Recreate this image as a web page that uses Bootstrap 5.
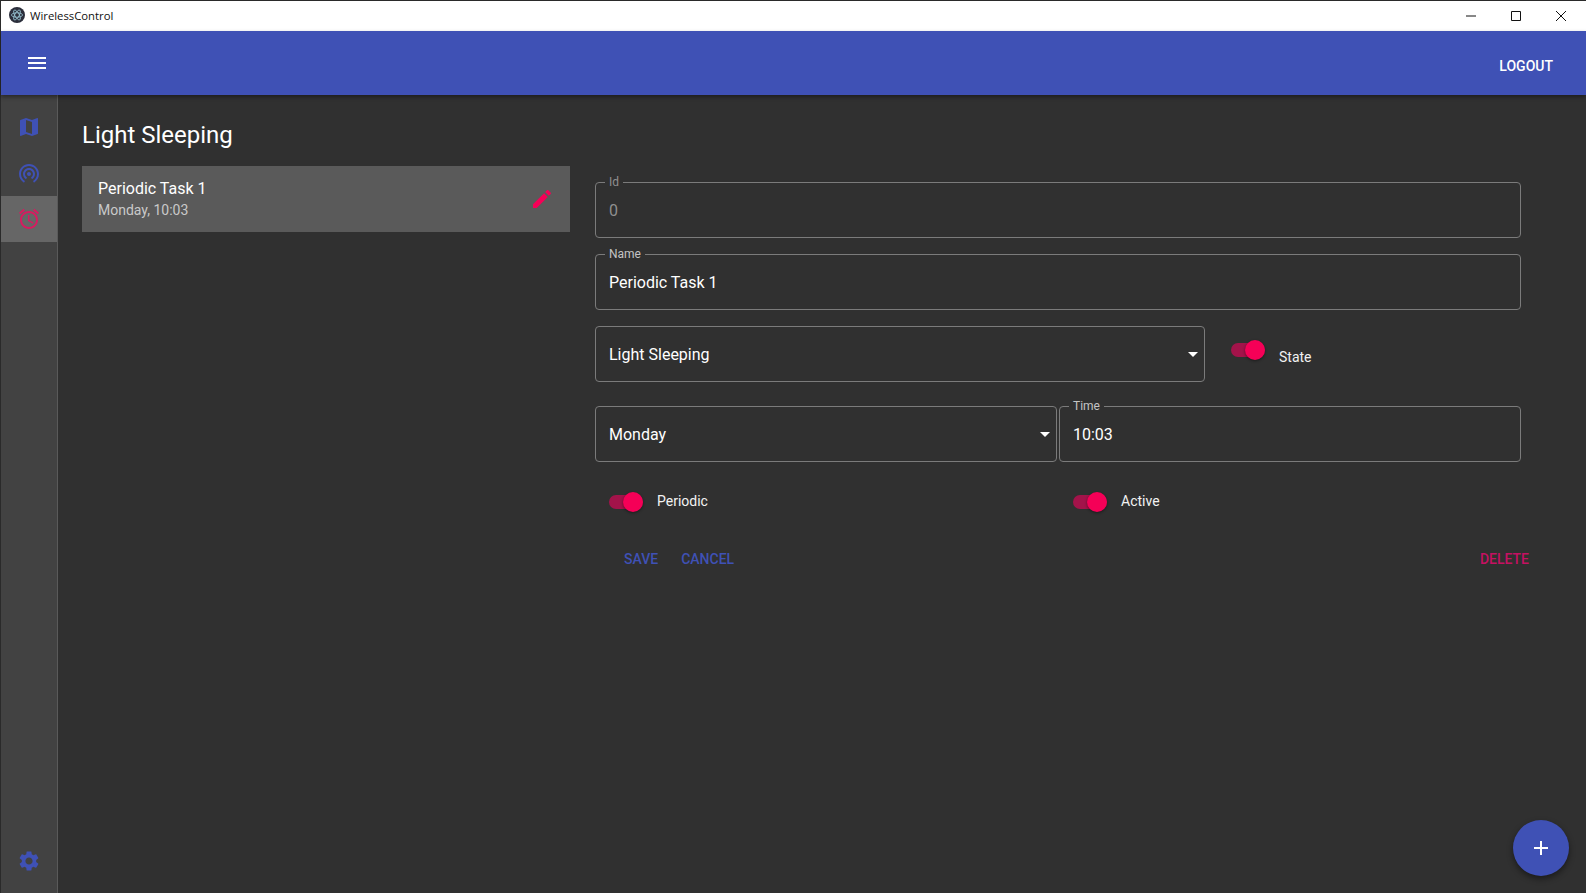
<!DOCTYPE html>
<html lang="en">
<head>
  <meta charset="UTF-8">
  <title>WirelessControl</title>
  <meta name="viewport" content="width=device-width, initial-scale=1">
  <link href="https://cdn.jsdelivr.net/npm/bootstrap@5.3.0/dist/css/bootstrap.min.css" rel="stylesheet">
  <style>
    html, body { height: 100%; }
    body { background: #303030; color: #fff; font-family: Roboto, "Liberation Sans", sans-serif; overflow: hidden; }
    svg { display: block; fill: currentColor; }
    .app-window { height: 893px; border-top: 1px solid #2a2a2a; border-left: 1px solid #2a2a2a; position: relative; }
    .title-bar { height: 30px; padding-bottom: 2px; background: #fff; color: #111; font: 11.3px "Open Sans", "Liberation Sans", sans-serif; }
    .app-logo { width: 16px; height: 16px; margin-left: 8px; margin-right: 5px; }
    .win-ctl { width: 45px; height: 30px; color: #111; }
    .win-group { margin-right: 3px; margin-top: 1px; }
    .app-bar { height: 64px; background: #3f51b5; box-shadow: 0 2px 4px rgba(0,0,0,.4); position: relative; z-index: 2; }
    .menu-btn { margin-left: 24px; width: 24px; height: 24px; margin-top: 0; }
    .logout { font-size: 14px; font-weight: 500; margin-right: 33px; margin-top: 7px; }
    .side-rail { width: 57px; background: #424242; border-right: 1px solid #5a5a5a; padding-top: 9px; }
    .rail-item { height: 46px; color: #3f51b5; }
    .rail-item svg { width: 24px; height: 24px; }
    .rail-item.is-on { background: #666; color: #d81b60; }
    .rail-gear { margin-bottom: 9px; }
    .page-body { padding: 23px 0 0 24px; min-width: 0; }
    .page-title { font-size: 24px; font-weight: 400; line-height: 34px; margin: 0 0 14px; }
    .task-col { width: 488px; flex: none; }
    .task-row { height: 66px; background: #5a5a5a; padding: 0 16px; }
    .task-text { margin-top: -2px; }
    .task-name { font-size: 16px; line-height: 24px; }
    .task-sub { font-size: 14px; line-height: 20px; color: #c9c9c9; margin-top: -1px; }
    .task-edit { width: 24px; height: 24px; color: #f50057; }
    .form-col { width: 926px; margin-left: 25px; flex: none; padding-top: 10px; position: relative; }
    .field-box { border: 1px solid #7b7b7b; border-radius: 4px; height: 62px; padding: 0 13px; margin: 0; position: relative; min-width: 0; }
    .field-box legend { float: none; width: auto; font-size: 12px; line-height: 12px; color: #c4c4c4; padding: 0 4px; margin: -7px 0 0 -4px; display: block; }
    .field-box .field-val { font-size: 16px; line-height: 24px; margin-top: 11px; }
    .field-gap { margin-bottom: 10px !important; }
    .field-box.no-legend { height: 56px; display: flex; align-items: center; justify-content: space-between; padding: 1px 6px 0 13px; }
    .field-box.no-legend .field-val { margin-top: 0; }
    .field-time { margin-top: -6px; }
    .field-off legend, .field-off .field-val { color: #8f8f8f; }
    .caret-down { width: 0; height: 0; border-left: 5px solid transparent; border-right: 5px solid transparent; border-top: 5px solid #fff; }
    .mat-toggle { width: 34px; height: 14px; border-radius: 7px; background: #a3134a; position: relative; flex: none; margin-top: 1px; }
    .mat-toggle::after { content: ""; position: absolute; right: 0; top: -3px; width: 20px; height: 20px; border-radius: 50%; background: #f50057; box-shadow: 0 1px 3px rgba(0,0,0,.45); }
    .toggle-label { font-size: 14px; font-weight: 400; color: #f2f2f2; line-height: 20px; margin-left: 14px; }
    .flat-btn { font-size: 14px; font-weight: 500; line-height: 20px; color: #3f51b5; }
    .flat-btn.is-danger { color: #c51162; }
    .save-btn { margin-right: 23px; }
    .fab-add { position: absolute; right: 17px; bottom: 17px; width: 56px; height: 56px; border-radius: 50%; background: #3f51b5; color: #fff; box-shadow: 0 3px 6px rgba(0,0,0,.45); }
    .fab-add svg { width: 24px; height: 24px; }
  </style>
</head>
<body>
<div class="app-window d-flex flex-column">

  <!-- window chrome -->
  <div class="title-bar d-flex align-items-center flex-none">
    <svg class="app-logo" viewBox="0 0 16 16"><circle cx="8" cy="8" r="8" fill="#2b2e3b"/><g fill="none" stroke="#a8d8e8" stroke-width=".7"><ellipse cx="8" cy="8" rx="5.6" ry="2.2"/><ellipse cx="8" cy="8" rx="5.6" ry="2.2" transform="rotate(60 8 8)"/><ellipse cx="8" cy="8" rx="5.6" ry="2.2" transform="rotate(120 8 8)"/></g></svg>
    <span>WirelessControl</span>
    <div class="ms-auto d-flex win-group">
      <div class="win-ctl d-flex align-items-center justify-content-center"><svg width="10" height="10" viewBox="0 0 10 10"><path d="M0 5h10" stroke="#111" fill="none"/></svg></div>
      <div class="win-ctl d-flex align-items-center justify-content-center"><svg width="10" height="10" viewBox="0 0 10 10"><path d="M.5.5h9v9h-9z" stroke="#111" fill="none"/></svg></div>
      <div class="win-ctl d-flex align-items-center justify-content-center"><svg width="10" height="10" viewBox="0 0 10 10"><path d="M0 0l10 10M10 0L0 10" stroke="#111" fill="none"/></svg></div>
    </div>
  </div>

  <header class="app-bar d-flex align-items-center justify-content-between">
    <svg class="menu-btn" viewBox="0 0 24 24"><path d="M3 18h18v-2H3v2zm0-5h18v-2H3v2zm0-7v2h18V6H3z"/></svg>
    <span class="logout">LOGOUT</span>
  </header>

  <div class="d-flex flex-grow-1" style="min-height:0">
    <nav class="side-rail d-flex flex-column flex-shrink-0">
      <div class="rail-item d-flex align-items-center justify-content-center"><svg viewBox="0 0 24 24"><path d="M20.5 3l-.16.03L15 5.1 9 3 3.36 4.9c-.21.07-.36.25-.36.48V20.5c0 .28.22.5.5.5l.16-.03L9 18.9l6 2.1 5.64-1.9c.21-.07.36-.25.36-.48V3.5c0-.28-.22-.5-.5-.5zM15 19l-6-2.11V5l6 2.11V19z"/></svg></div>
      <div class="rail-item d-flex align-items-center justify-content-center"><svg viewBox="0 0 24 24"><path d="M12 11c-1.1 0-2 .9-2 2s.9 2 2 2 2-.9 2-2-.9-2-2-2zm6 2c0-3.31-2.69-6-6-6s-6 2.69-6 6c0 2.22 1.21 4.15 3 5.19l1-1.74c-1.19-.7-2-1.97-2-3.45 0-2.21 1.79-4 4-4s4 1.79 4 4c0 1.48-.81 2.75-2 3.45l1 1.74c1.79-1.04 3-2.97 3-5.19zM12 3C6.48 3 2 7.48 2 13c0 3.7 2.01 6.92 4.99 8.65l1-1.73C5.61 18.53 4 15.96 4 13c0-4.42 3.58-8 8-8s8 3.58 8 8c0 2.96-1.61 5.53-4 6.92l1 1.73c2.99-1.73 5-4.95 5-8.65 0-5.52-4.48-10-10-10z"/></svg></div>
      <div class="rail-item is-on d-flex align-items-center justify-content-center"><svg viewBox="0 0 24 24"><path d="M22 5.72l-4.6-3.86-1.29 1.53 4.6 3.86L22 5.72zM7.88 3.39L6.6 1.86 2 5.71l1.29 1.53 4.59-3.85zM12.5 8H11v6l4.75 2.85.75-1.23-4-2.37V8zM12 4c-4.97 0-9 4.03-9 9s4.03 9 9 9 9-4.03 9-9-4.03-9-9-9zm0 16c-3.87 0-7-3.13-7-7s3.13-7 7-7 7 3.13 7 7-3.13 7-7 7z"/></svg></div>
      <div class="rail-item rail-gear d-flex align-items-center justify-content-center mt-auto"><svg viewBox="0 0 24 24"><path d="M19.14 12.94c.04-.3.06-.61.06-.94 0-.32-.02-.64-.07-.94l2.03-1.58c.18-.14.23-.41.12-.61l-1.92-3.32c-.12-.22-.37-.29-.59-.22l-2.39.96c-.5-.38-1.03-.7-1.62-.94L14.4 2.81c-.04-.24-.24-.41-.48-.41h-3.84c-.24 0-.43.17-.47.41L9.25 5.35c-.59.24-1.13.57-1.62.94l-2.39-.96c-.22-.08-.47 0-.59.22L2.74 8.87c-.12.21-.08.47.12.61l2.03 1.58c-.05.3-.09.63-.09.94s.02.64.07.94l-2.03 1.58c-.18.14-.23.41-.12.61l1.92 3.32c.12.22.37.29.59.22l2.39-.96c.5.38 1.03.7 1.62.94l.36 2.54c.05.24.24.41.48.41h3.84c.24 0 .44-.17.47-.41l.36-2.54c.59-.24 1.13-.56 1.62-.94l2.39.96c.22.08.47 0 .59-.22l1.92-3.32c.12-.22.07-.47-.12-.61l-2.01-1.58zM12 15.6c-1.98 0-3.6-1.62-3.6-3.6s1.62-3.6 3.6-3.6 3.6 1.62 3.6 3.6-1.62 3.6-3.6 3.6z"/></svg></div>
    </nav>

    <main class="page-body flex-grow-1">
      <h1 class="page-title">Light Sleeping</h1>
      <div class="d-flex">
        <div class="task-col">
          <div class="task-row d-flex align-items-center justify-content-between">
            <div class="task-text">
              <div class="task-name">Periodic Task 1</div>
              <div class="task-sub">Monday, 10:03</div>
            </div>
            <svg class="task-edit" viewBox="0 0 24 24"><path d="M3 17.25V21h3.75L17.81 9.94l-3.75-3.75L3 17.25zM20.71 7.04c.39-.39.39-1.02 0-1.41l-2.34-2.34c-.39-.39-1.02-.39-1.41 0l-1.83 1.83 3.75 3.75 1.83-1.83z"/></svg>
          </div>
        </div>

        <div class="form-col">
          <fieldset class="field-box field-off field-gap"><legend>Id</legend><div class="field-val">0</div></fieldset>
          <fieldset class="field-box mb-3"><legend>Name</legend><div class="field-val">Periodic Task 1</div></fieldset>

          <div class="d-flex mb-4">
            <div class="field-box no-legend" style="width:610px"><div class="field-val">Light Sleeping</div><span class="caret-down"></span></div>
            <div class="d-flex" style="margin-left:26px">
              <span class="mat-toggle" style="margin-top:17px"></span>
              <span class="toggle-label" style="margin-top:21px">State</span>
            </div>
          </div>

          <div class="d-flex mb-4 align-items-start" style="gap:2px">
            <div class="field-box no-legend" style="width:462px"><div class="field-val">Monday</div><span class="caret-down"></span></div>
            <fieldset class="field-box field-time flex-grow-1"><legend>Time</legend><div class="field-val">10:03</div></fieldset>
          </div>

          <div class="d-flex align-items-center" style="padding:5px 14px 0">
            <div class="d-flex align-items-center" style="width:464px">
              <span class="mat-toggle"></span><span class="toggle-label">Periodic</span>
            </div>
            <div class="d-flex align-items-center">
              <span class="mat-toggle"></span><span class="toggle-label">Active</span>
            </div>
          </div>

          <div class="d-flex align-items-center" style="margin:38px -8px 0 29px">
            <span class="flat-btn save-btn">SAVE</span>
            <span class="flat-btn">CANCEL</span>
            <span class="flat-btn is-danger ms-auto">DELETE</span>
          </div>
        </div>
      </div>
    </main>
  </div>

  <div class="fab-add d-flex align-items-center justify-content-center"><svg viewBox="0 0 24 24"><path d="M19 13h-6v6h-2v-6H5v-2h6V5h2v6h6v2z"/></svg></div>
</div>
</body>
</html>
